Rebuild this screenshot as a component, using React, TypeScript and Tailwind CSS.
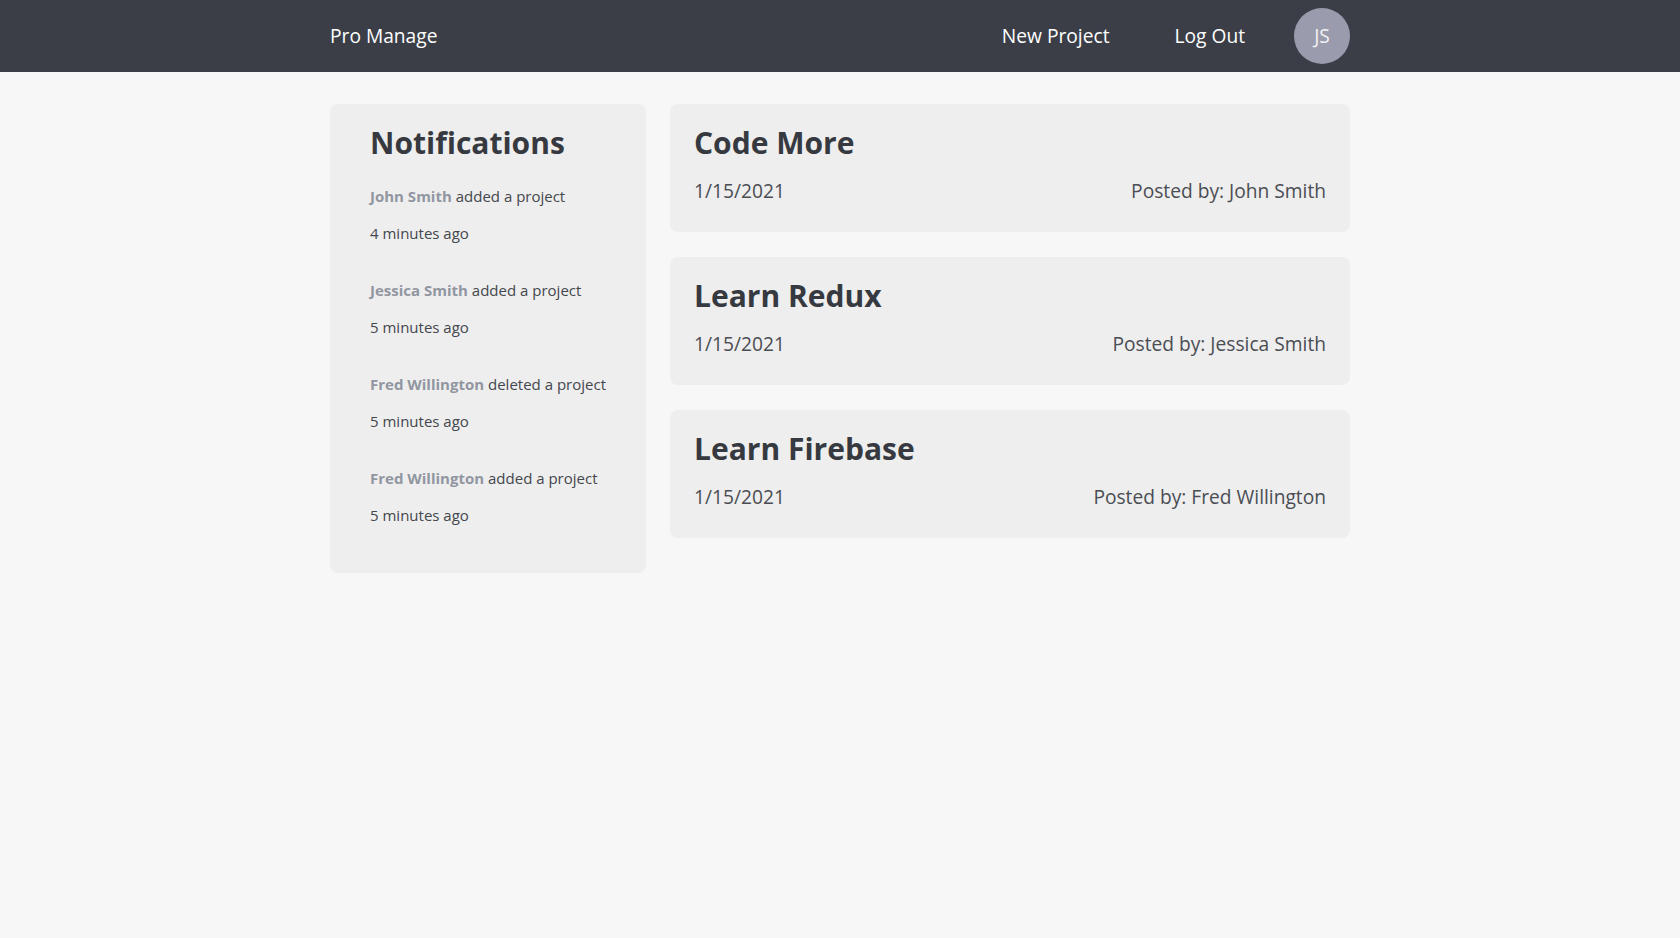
import React from "react";

const notifications = [
  { name: "John Smith", action: "added a project", time: "4 minutes ago" },
  { name: "Jessica Smith", action: "added a project", time: "5 minutes ago" },
  { name: "Fred Willington", action: "deleted a project", time: "5 minutes ago" },
  { name: "Fred Willington", action: "added a project", time: "5 minutes ago" },
];

const projects = [
  { title: "Code More", date: "1/15/2021", by: "John Smith" },
  { title: "Learn Redux", date: "1/15/2021", by: "Jessica Smith" },
  { title: "Learn Firebase", date: "1/15/2021", by: "Fred Willington" },
];

export default function App() {
  return (
    <div className="min-h-[938px] bg-[#f7f7f7] font-['Open_Sans',sans-serif] text-[#3a3d43]">
      <nav className="h-[72px] bg-[#3b3e47]">
        <div className="mx-auto flex h-full w-[1020px] items-center">
          <span className="text-[19.2px] text-white">Pro Manage</span>
          <div className="ml-auto flex items-center">
            <span className="text-[19.2px] text-white">New Project</span>
            <span className="ml-[65px] text-[19.2px] text-white">Log Out</span>
            <div className="ml-[49px] flex h-[56px] w-[56px] items-center justify-center rounded-full bg-[#9a9cad] text-[19.2px] text-[#f2f2f2]">
              JS
            </div>
          </div>
        </div>
      </nav>

      <main className="mx-auto mt-[32px] flex w-[1020px] items-start gap-[24px]">
        <section className="w-[316px] shrink-0 rounded-[8px] bg-[#eeeeee] px-[40px] pb-[47px] pt-[20px]">
          <h2 className="text-[30px] font-bold leading-[38px] text-[#363a40]">Notifications</h2>
          <div className="mt-[23px] flex flex-col gap-[35px]">
            {notifications.map((n, i) => (
              <div key={i} className="flex flex-col gap-[15px] text-[15px] leading-[22px] text-[#44474d]">
                <p>
                  <span className="font-bold text-[#9196a1]">{n.name}</span> {n.action}
                </p>
                <p>{n.time}</p>
              </div>
            ))}
          </div>
        </section>

        <section className="flex flex-1 flex-col gap-[25px]">
          {projects.map((p, i) => (
            <div key={i} className="rounded-[8px] bg-[#eeeeee] px-[24px] pb-[27px] pt-[20px]">
              <h2 className="text-[30px] font-bold leading-[38px] text-[#363a40]">{p.title}</h2>
              <div className="mt-[14px] flex justify-between text-[19.2px] leading-[29px] text-[#4a4d53]">
                <span>{p.date}</span>
                <span>Posted by: {p.by}</span>
              </div>
            </div>
          ))}
        </section>
      </main>
    </div>
  );
}
